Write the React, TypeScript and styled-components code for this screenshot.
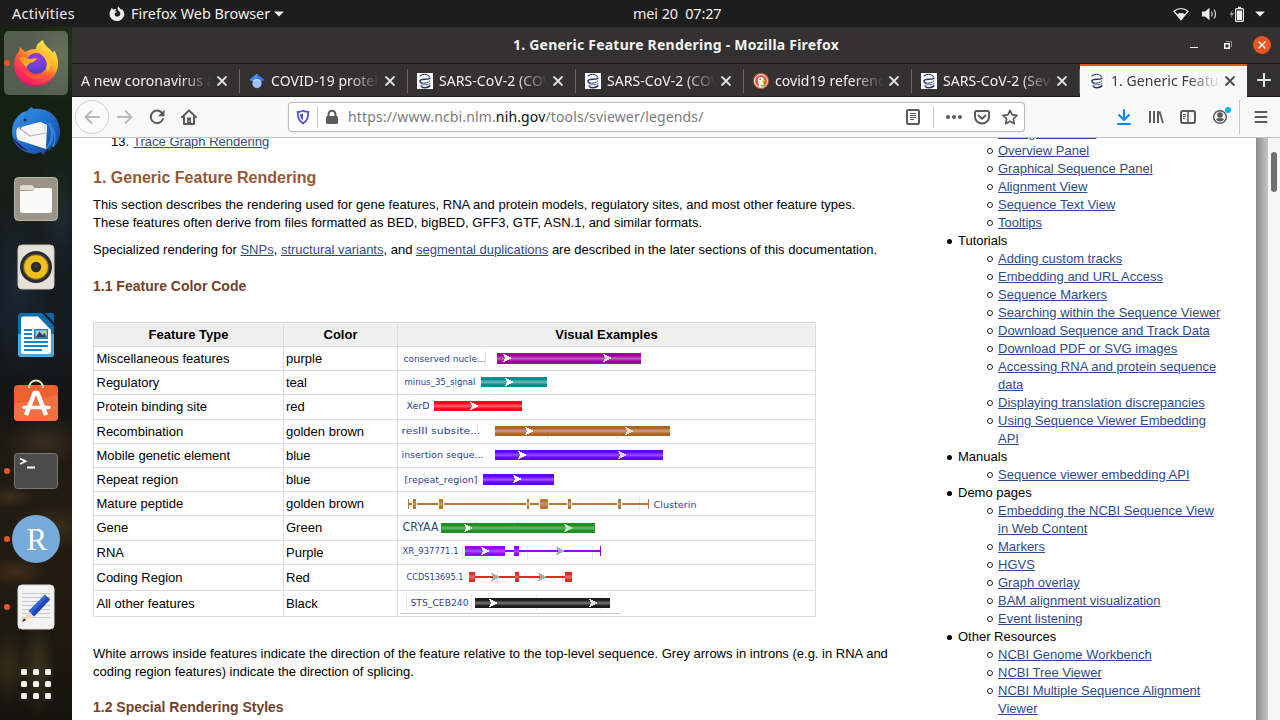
import React from "react";
import styled, { createGlobalStyle } from "styled-components";

const Global = createGlobalStyle`
  *, *::before, *::after { box-sizing: border-box; }
  body { margin: 0; overflow: hidden; font-family: "Liberation Sans", Arial, sans-serif; font-size: 13px; color: #000; }
  svg { display: block; flex: none; overflow: visible; }
`;

const uiFont = `"Noto Sans", "Open Sans", sans-serif`;

const Desktop = styled.div`
  width: 1280px; height: 720px; overflow: hidden;
  display: flex; flex-direction: column; background: #1d1d1d;
`;
const TopBar = styled.header`
  height: 27px; flex: none; display: flex; align-items: center;
  background: #1d1d1d; color: #efefef; font: 14.4px/26px ${uiFont};
`;
const TopLeft = styled.div`display: flex; align-items: center; padding-left: 12px; width: 633px;`;
const TopRight = styled.div`flex: 1; display: flex; align-items: center; justify-content: flex-end; padding-right: 15px;`;
const Label = styled.span<{ $ls?: number; $w?: number }>`
  white-space: pre; letter-spacing: ${p => p.$ls ?? 0}px;
  ${p => (p.$w ? `width: ${p.$w}px;` : "")}
`;
const Indicator = styled.span<{ $gap: number }>`margin-right: ${p => p.$gap}px;`;
const AppGlyph = styled.span`margin-right: 6px;`;
const Body = styled.div`flex: 1; display: flex; min-height: 0;`;
const Dock = styled.nav`
  width: 72px; flex: none; padding-top: 2px; display: flex; flex-direction: column;
  background:
    radial-gradient(ellipse 30px 46px at 60px 30px, #3b4c2799, transparent),
    radial-gradient(ellipse 34px 90px at 18px 260px, #1d2a3acc, transparent),
    radial-gradient(ellipse 24px 60px at 60px 190px, #26334199, transparent),
    radial-gradient(ellipse 40px 26px at 44px 415px, #4a3a2699, transparent),
    radial-gradient(ellipse 26px 12px at 10px 470px, #4b3c2399, transparent),
    radial-gradient(ellipse 44px 22px at 54px 500px, #43361fbb, transparent),
    radial-gradient(ellipse 30px 14px at 16px 545px, #4c351dbb, transparent),
    radial-gradient(ellipse 22px 40px at 8px 640px, #43381faa, transparent),
    radial-gradient(ellipse 18px 50px at 38px 640px, #4a4226aa, transparent),
    linear-gradient(#17240f 0, #142013 90px, #161f17 150px, #151a1b 220px, #141a20 300px, #141514 380px, #1e1a13 420px, #241c12 540px, #1d1810 600px, #17140e 693px);
`;
const DockItem = styled.div<{ $active?: boolean; $running?: boolean }>`
  position: relative; width: 64px; height: 64px; margin: 2px 4px; border-radius: 5px;
  display: flex; align-items: center; justify-content: center;
  background: ${p => (p.$active ? "rgba(255,255,255,.27)" : "transparent")};
  &::before {
    content: ""; display: ${p => (p.$running ? "block" : "none")};
    position: absolute; left: 0; top: 29px; width: 6px; height: 6px; border-radius: 50%; background: #e95420;
  }
`;
const AppsButton = styled.div`
  width: 30px; height: 30px; margin: 28px auto 0 21px; display: grid; grid-template-columns: repeat(3, 6px); gap: 6px;
  span { width: 6px; height: 6px; border-radius: 1.5px; background: #f1f1ef; }
`;

const Window = styled.main`flex: 1; min-width: 0; display: flex; flex-direction: column;`;
const TitleBar = styled.div`
  height: 37px; flex: none; display: grid; grid-template-columns: 1fr auto 1fr; align-items: center;
  background: #333132; border-bottom: 1px solid #1b1a1a; color: #f4f3f1;
  font: bold 14px/36px ${uiFont};
`;
const WindowButtons = styled.div`display: flex; justify-content: flex-end; align-items: center; padding-right: 9px;`;
const TabStrip = styled.div`height: 33px; flex: none; display: flex; background: #333132; box-shadow: inset 0 -1px #1b1a1a;`;
const Tab = styled.div<{ $active?: boolean }>`
  width: ${p => (p.$active ? 167 : 168)}px; flex: none; height: 33px; padding: 0 9px 2px; display: flex; align-items: center; position: relative;
  font: 14px/30px ${uiFont}; color: ${p => (p.$active ? "#3b3b3b" : "#f4f3f1")};
  background: ${p => (p.$active ? "#f8f8f8" : "transparent")};
  border-top: 2px solid ${p => (p.$active ? "#e95420" : "transparent")};
  &::after {
    content: ""; display: ${p => (p.$active ? "none" : "block")};
    position: absolute; right: 0; top: 3px; width: 1px; height: 24px; background: #666;
  }
`;
const TabTitle = styled.span`
  flex: 1; min-width: 0; overflow: hidden; white-space: nowrap; letter-spacing: .06px;
  mask-image: linear-gradient(to right, #000 calc(100% - 32px), transparent 100%);
`;
const Favicon = styled.span`width: 16px; height: 16px; margin-right: 6px;`;
const TabClose = styled.span<{ $active?: boolean }>`width: 12px; height: 12px; margin: 0 ${p => (p.$active ? 2 : 3)}px 0 4px;`;
const NewTab = styled.div`flex: 1; display: flex; align-items: center; justify-content: center; padding-bottom: 1px;`;

const Toolbar = styled.div`
  height: 41px; flex: none; display: flex; align-items: center; background: #f8f8f8; border-bottom: 1px solid #c0c0c0;
`;
const BackButton = styled.div`
  width: 34px; height: 34px; margin-left: 3px; border: 1px solid #d0d0d0; border-radius: 50%; background: #fbfbfb;
  display: flex; align-items: center; justify-content: center;
`;
const ToolIcon = styled.div<{ $ml: number }>`width: 16px; height: 16px; margin-left: ${p => p.$ml}px;`;
const UrlBar = styled.div`
  width: 737px; height: 30px; margin-left: 91px; padding-left: 6px; display: flex; align-items: center;
  border: 1px solid #bcbcbc; border-radius: 4px; background: #fff; box-shadow: 0 0 1px #ccc;
`;
const Divider = styled.i<{ $ml: number; $h?: number }>`
  width: 1px; height: ${p => p.$h ?? 22}px; margin-left: ${p => p.$ml}px; background: #c8c8c8;
`;
const Url = styled.span`
  width: 560px; margin-left: 6px; font: 14px/28px ${uiFont}; letter-spacing: .14px; color: #7b7b7b; white-space: nowrap;
  b { font-weight: 400; color: #0c0c0d; }
`;

const Viewport = styled.div`flex: 1; min-height: 0; display: flex; overflow: hidden; background: #fff;`;
const Page = styled.div`width: 1184px; flex: none; display: flex; line-height: 18px;`;
const PageEdge = styled.div`width: 12px; flex: none; background: linear-gradient(to right, #8c8c8c, #c6c6c6);`;
const Scrollbar = styled.div`
  width: 12px; flex: none; background: #f6f6f6; padding: 14px 0 0 3px;
  &::before { content: ""; display: block; width: 6px; height: 40px; border-radius: 3px; background: #6f6f6f; }
`;
const Article = styled.article`width: 825px; flex: none; padding-left: 21px;`;
const TocLine = styled.div`margin: -5px 0 0 18px; height: 18px; display: flex; gap: 4px;`;
const A = styled.a`color: #2f4a8b; text-decoration: underline; text-underline-offset: 1px;`;
const H2 = styled.h2`margin: 17px 0 0; font: bold 16px/20px "Liberation Sans", sans-serif; color: #985735;`;
const H3 = styled.h3<{ $mt: number }>`margin: ${p => p.$mt}px 0 0; font: bold 14px/18px "Liberation Sans", sans-serif; color: #724128;`;
const P = styled.p<{ $mt: number }>`margin: ${p => p.$mt}px 0 0; white-space: nowrap;`;

const Table = styled.div`width: 723px; margin-top: 27px; border: 1px solid #dcdcdc; border-top: 0;`;
const Row = styled.div<{ $h: number; $head?: boolean }>`
  display: grid; grid-template-columns: 189px 113px 417px; column-gap: 1px; height: ${p => p.$h}px;
  border-top: 1px solid #dcdcdc; background: #dcdcdc;
  ${p => p.$head && "font-weight: bold; text-align: center;"}
`;
const Cell = styled.div<{ $head?: boolean; $pad?: number }>`
  background: ${p => (p.$head ? "#efefef" : "#fff")}; padding-left: ${p => p.$pad ?? 0}px;
  display: flex; align-items: center; justify-content: ${p => (p.$head ? "center" : "flex-start")};
`;

const Aside = styled.aside`width: 309px; margin-left: 48px; margin-top: -14px;`;
const Item = styled.div<{ $sub?: boolean }>`
  display: flex; margin-left: ${p => (p.$sub ? 42 : 2)}px;
  &::before {
    content: ""; flex: none; width: ${p => (p.$sub ? 6 : 5)}px; height: ${p => (p.$sub ? 6 : 5)}px;
    margin: ${p => (p.$sub ? "6px 5px 0 0" : "7px 6px 0 0")}; border-radius: 50%;
    background: ${p => (p.$sub ? "transparent" : "#000")}; border: ${p => (p.$sub ? "1px solid #222" : "0")};
  }
`;
const SubLink = styled.div`width: 229px;`;

/* ---------- feature tracks ---------- */
type Exon = [number, number];
type Feature = {
  type: string; color: string; h: number; label: string; lx: number; lw: number; ly: number;
  fill: string; core: string; y: number; bh: number; boxes: Exon[]; line?: Exon;
  arrows: [number, string][]; ticks: number[]; base?: [number, number, number, string];
};
const F: Feature[] = [
  { type: "Miscellaneous features", color: "purple", h: 24, label: "conserved nucle...", lx: 5.5, lw: 82, ly: 15, fill: "#990099", core: "#c458c0", y: 6, bh: 11, boxes: [[99, 243]], arrows: [[105, "#fff"], [205, "#e6d9e6"]], ticks: [87] },
  { type: "Regulatory", color: "teal", h: 24, label: "minus_35_signal", lx: 6.5, lw: 71, ly: 14, fill: "#008c8a", core: "#6cbcbc", y: 6, bh: 10, boxes: [[83, 149]], arrows: [[107, "#fff"]], ticks: [55] },
  { type: "Protein binding site", color: "red", h: 25, label: "XerD", lx: 8.5, lw: 23, ly: 14, fill: "#ff0018", core: "#ff6b70", y: 6, bh: 10, boxes: [[36, 124]], arrows: [[72, "#fff"]], ticks: [16, 96] },
  { type: "Recombination", color: "golden brown", h: 24, label: "resIII subsite...", lx: 3.5, lw: 79, ly: 14, fill: "#b1621f", core: "#cf9f78", y: 6, bh: 10, boxes: [[97, 272]], arrows: [[127, "#fff"], [227, "#e3dcd6"]], ticks: [9, 79, 149, 219] },
  { type: "Mobile genetic element", color: "blue", h: 24, label: "insertion seque...", lx: 3.5, lw: 82, ly: 14, fill: "#6000ff", core: "#9a55ff", y: 6, bh: 10, boxes: [[97, 265]], arrows: [[120, "#fff"], [220, "#ddd6e8"]], ticks: [132] },
  { type: "Repeat region", color: "blue", h: 24, label: "[repeat_region]", lx: 6.5, lw: 73, ly: 15, fill: "#6000ff", core: "#9a55ff", y: 6, bh: 11, boxes: [[85, 156]], arrows: [[115, "#fff"]], ticks: [26, 97] },
  { type: "Mature peptide", color: "golden brown", h: 24, label: "Clusterin", lx: 255.5, lw: 43, ly: 16, fill: "#b87431", core: "#cc9964", y: 7, bh: 10, boxes: [[10, 11], [15, 18], [41, 45], [129, 131], [142, 150], [170, 173], [220, 223], [250, 251]], line: [11, 250], arrows: [], ticks: [45, 143, 241] },
  { type: "Gene", color: "Green", h: 25, label: "CRYAA", lx: 4.5, lw: 36, ly: 15, fill: "#1b8f1d", core: "#68b869", y: 7, bh: 10, boxes: [[43, 197]], arrows: [[66, "#e4f8e4"], [166, "#bfe8c4"]], ticks: [78, 119] },
  { type: "RNA", color: "Purple", h: 24, label: "XR_937771.1", lx: 4.5, lw: 56, ly: 13, fill: "#9800ff", core: "#b94dff", y: 5, bh: 10, boxes: [[67, 107], [116, 121], [202, 203]], line: [107, 202], arrows: [[83, "#fff"], [158, "#aaa"]], ticks: [3, 64, 129, 194], base: [3, 209, 17, "#ecf8ec"] },
  { type: "Coding Region", color: "Red", h: 26, label: "CCDS13695.1", lx: 8.5, lw: 57, ly: 15, fill: "#dc2a25", core: "#ee736d", y: 7, bh: 10, boxes: [[71, 77], [117, 121], [167, 174]], line: [77, 167], arrows: [[93, "#aaa"], [140, "#aaa"]], ticks: [34, 99, 164] },
  { type: "All other features", color: "Black", h: 26, label: "STS_CEB240", lx: 12.5, lw: 58, ly: 15, fill: "#1c1c1c", core: "#757575", y: 7, bh: 10, boxes: [[77, 212]], arrows: [[91, "#fff"], [191, "#ddd"]], ticks: [8, 73, 138, 203], base: [2, 222, 22, "#c8c8c8"] },
];

const Track = ({ f, i }: { f: Feature; i: number }) => {
  const mid = f.y + Math.floor(f.bh / 2);
  const big = f.label === "CRYAA";
  return (
    <svg width="417" height={f.h - 1} shapeRendering="crispEdges">
      <defs>
        <linearGradient id={`g${i}`} x1="0" y1="0" x2="0" y2="1">
          <stop offset="0" stopColor={f.fill} /><stop offset=".22" stopColor={f.fill} />
          <stop offset=".5" stopColor={f.core} /><stop offset=".78" stopColor={f.fill} /><stop offset="1" stopColor={f.fill} />
        </linearGradient>
      </defs>
      {f.ticks.map(t => <rect key={t} x={t} y="4" width="1" height="15" fill="#e6e6e6" />)}
      {f.base && <rect x={f.base[0]} y={f.base[2]} width={f.base[1] - f.base[0]} height="1" fill={f.base[3]} />}
      {f.line && <rect x={f.line[0]} y={mid - 1} width={f.line[1] - f.line[0]} height="2" fill={f.fill} />}
      {f.boxes.map(([a, b]) => (
        <React.Fragment key={a}>
          {f.type === "Mature peptide" && b - a > 1 && <rect x={a - 1} y={f.y} width={b - a + 2} height={f.bh} fill="#fff" />}
          <rect x={a} y={f.y} width={b - a} height={f.bh} fill={b - a > 1 ? `url(#g${i})` : f.fill} />
        </React.Fragment>
      ))}
      {f.arrows.map(([x, c]) => (
        <path key={x} d={`M${x} ${mid - 4}h2v1h2v1h2v1h2v2h-2v1h-2v1h-2v1h-2v-1h1v-2h1v-2h-1v-2h-1z`} fill={c} />
      ))}
      <text x={f.lx} y={f.ly} textLength={f.lw} lengthAdjust="spacingAndGlyphs" fill={big ? "#2b4a6a" : "#2c3f94"}
        fontFamily='"DejaVu Sans", sans-serif' fontSize={big ? 11.5 : 9.3}>{f.label}</text>
    </svg>
  );
};

/* ---------- icons ---------- */
const Stroke = ({ d, c = "#5a5a5a", w = 2, s = 16 }: { d: string; c?: string; w?: number; s?: number }) => (
  <svg width={s} height={s} viewBox="0 0 16 16" fill="none" stroke={c} strokeWidth={w} strokeLinecap="round" strokeLinejoin="round"><path d={d} /></svg>
);
const Close = ({ c = "#e2e2e2" }: { c?: string }) => (
  <svg width="12" height="12" fill="none" stroke={c} strokeWidth="1.8" strokeLinecap="round"><path d="M2 2l8 8M10 2L2 10" /></svg>
);
const Ncbi = () => (
  <svg width="16" height="16"><rect width="16" height="16" fill="#fff" />
    <g fill="none" stroke="#25386a" strokeLinecap="round">
      <path d="M3 3.200C4.800.8 10 .4 12.600 3.600" strokeWidth="1.100" />
      <path d="M13 5.200C10.500 7.400 4 5 2.900 7.900c-.2 1 .6 1.800 1.700 2.200" strokeWidth="1.500" />
      <path d="M4.600 10.100c3 .6 7.300-.4 8.400-2.300" strokeWidth="1" />
      <path d="M3 13C4.500 10.600 8 12.600 13 10.800" strokeWidth=".7" />
      <path d="M4.600 13.800c2 1.300 6 1.300 8.200-.9" strokeWidth="1.600" />
    </g>
  </svg>
);
const Scholar = () => (
  <svg width="16" height="16"><path d="M8 .8L15.600 7 12.500 8.200H3.500L.4 7z" fill="#3b78e7" /><path d="M8 .8v7.400H3.500L.4 7z" fill="#4f8bf5" />
    <circle cx="8" cy="10.600" r="4.600" fill="#a0c2fb" /><path d="M3.800 8.700a4.700 4.700 0 0 1 8.400 0L8 7z" fill="#cfe0fc" /></svg>
);
const Duck = () => (
  <svg width="16" height="16"><circle cx="8" cy="8" r="8" fill="#de5833" /><circle cx="8" cy="8" r="6.400" fill="none" stroke="#fff" strokeWidth="1" />
    <path d="M6.200 13.600C5.500 10.500 4.600 7 5.200 5.400 5.800 3.600 10 3 10.600 6l-.2 4 .8 3.400C9.500 14.400 7.500 14.300 6.200 13.600z" fill="#fff" />
    <path d="M8.600 7.600c1.200-.8 3.200-.8 3.800-.4-.5.700-1.600 1.200-2.700 1.400l1.800.5c-1.200.5-2.900.3-2.900-.5z" fill="#fdd20a" /><circle cx="7.200" cy="6.200" r=".8" fill="#2d4f8e" />
    <path d="M7.500 11.500l2 .8 2.400-.8v2.200l-2.200-.4-1.800.5z" fill="#65bc46" /></svg>
);

const FirefoxLogo = () => (
  <svg width="46" height="48" viewBox="0 0 46 48">
    <defs>
      <linearGradient id="ffa" x1=".85" y1=".05" x2=".25" y2=".95"><stop offset="0" stopColor="#fff44f" /><stop offset=".35" stopColor="#ffb62a" /><stop offset=".62" stopColor="#ff5a36" /><stop offset="1" stopColor="#f0136e" /></linearGradient>
      <radialGradient id="ffb" cx=".5" cy=".25" r=".8"><stop offset="0" stopColor="#a238c8" /><stop offset=".5" stopColor="#7540e0" /><stop offset="1" stopColor="#4a3fb0" /></radialGradient>
      <linearGradient id="ffc" x1="0" y1="0" x2="1" y2="1"><stop offset="0" stopColor="#ff8a16" /><stop offset="1" stopColor="#ffcf2f" /></linearGradient>
    </defs>
    <path d="M30 1c1 6 7 8 10 13l1-3c3 5 4.500 10 4 15-1 12-11 21-22 21S1 38 1 26c0-6 2-10 5-13l1-5 5 5c3-2 7-3 11-3 0-4 3-7 7-9z" fill="url(#ffa)" />
    <path d="M2 33c4 15 30 18 39 3-5 15-34 16-39-3z" fill="#e3107a" opacity=".8" />
    <circle cx="23.500" cy="24.500" r="10.500" fill="url(#ffb)" />
    <path d="M27 14c5-3 10 1 11 7 1 7-3 13-9 15 4-5 6-9 4-14-1-4-4-5-6-8z" fill="#ffc02c" />
    <path d="M6 19c4-3 7 0 11 1 3 0 5-1 7-1-1 3-4 4-7 5-2 1-2 3-4 4-2-3-5-5-7-9z" fill="url(#ffc)" />
    <path d="M13 27c-2 5 3 10 10 9 6 0 9-3 11-7 1 7-5 11-11 11-8 0-13-6-10-13z" fill="#ff5b33" opacity=".75" />
  </svg>
);
const Thunderbird = () => (
  <svg width="48" height="48" viewBox="0 0 48 48">
    <defs><linearGradient id="tb" x1="0" y1="0" x2="1" y2="1"><stop offset="0" stopColor="#3a9be8" /><stop offset=".5" stopColor="#1f6fc9" /><stop offset="1" stopColor="#1a3c93" /></linearGradient></defs>
    <path d="M15 4l4-4 3 2c13-2 26 7 26 23 0 7-3 12-7 16l1-4-5 7-1-3-5 7-2-3-6 2C9 46 0 36 0 25 0 15 5 9 11 5z" fill="url(#tb)" />
    <path d="M1 30c3 8 8 12 15 14L5 35z" fill="#2b1566" />
    <path d="M5 21l23-6 7 3-1 24L6 33c-2-4-2-8-1-12z" fill="#f7f7f8" />
    <path d="M6 20l12 9 16-3" fill="none" stroke="#b9b9c4" strokeWidth="1.200" /><path d="M28 15l7 3v8z" fill="#e2e4ec" />
    <path d="M8 23c-1-10 6-19 14-21-3 4 4 3 8 7-8-1-13 2-15 6l-3 2z" fill="#2a7fd6" /><circle cx="13" cy="13" r="1.500" fill="#17244f" />
    <path d="M34 42c7-8 7-19 2-26 6 5 9 13 5 24M38 38c4-8 3-16 0-22" fill="none" stroke="#2e86de" strokeWidth="1.500" />
  </svg>
);
const Files = () => (
  <svg width="44" height="44"><rect x=".5" y=".5" width="43" height="43" rx="4" fill="#9b9385" stroke="#bcb5a6" />
    <path d="M6 13V10.500Q6 8 8.500 8H18l3 3h15q2 0 2 3z" fill="#dcd8cd" /><path d="M6 14h13l3-3h14q2 0 2 2v20.500q0 2.500-2.500 2.500h-27Q6 36 6 33.500z" fill="#fafafa" /></svg>
);
const Rhythm = () => (
  <svg width="38" height="46"><rect x="1" y="1" width="36" height="44" rx="4" fill="#e6e1d7" stroke="#cfc9bd" /><circle cx="19" cy="23" r="16" fill="#2b2b38" /><circle cx="19" cy="23" r="13" fill="#6b6030" />
    <circle cx="19" cy="23" r="11.800" fill="#efbf1d" /><circle cx="19" cy="23" r="5.200" fill="#2a2a2a" /><circle cx="19" cy="22" r="2" fill="#3c3c3c" /></svg>
);
const Writer = () => (
  <svg width="38" height="46"><path d="M4 1h21l12 13v28q0 3-3 3H4q-3 0-3-3V4q0-3 3-3z" fill="#0a6fae" /><path d="M1 22h36v20q0 3-3 3H4q-3 0-3-3z" fill="#4aa9e0" /><path d="M28 1h7q2 0 2 2v8z" fill="#0c669f" />
    <path d="M6 4.500h15l13 13.500v21q0 3-3 3H7q-3 0-3-3v-32q0-2.500 2-2.500z" fill="#fdfdfd" />
    <g fill="#1784c4"><path d="M7 17h8v2H7zM7 21h8v2H7zM7 25h8v2H7zM7 29h24v2H7zM7 33h24v2H7zM7 37h18v2H7z" /><path d="M17 17h14v10H17z" /></g>
    <path d="M18.500 18.500h11v7h-11z" fill="#9dd2ef" /><path d="M18.500 25.500l4-6 3 3.500 2-2 2 4.500z" fill="#3a3f44" /><path d="M26 18.500h3.500V22z" fill="#f5c400" /></svg>
);
const Software = () => (
  <svg width="44" height="50"><rect y="7" width="44" height="36" rx="4" fill="#ee6231" /><path d="M0 26l44-9v22q0 4-4 4H4q-4 0-4-4z" fill="#f47b50" opacity=".6" />
    <path d="M15 10C15 0 29 0 29 10" fill="none" stroke="#f3dfb5" strokeWidth="2" />
    <g fill="none" stroke="#fff" strokeLinejoin="round"><path d="M12 37L20.500 15h3L32 37" strokeWidth="4.500" /><path d="M10 29.500h25" strokeWidth="3.600" strokeLinecap="round" /></g></svg>
);
const Terminal = () => (
  <svg width="44" height="36"><rect x=".5" y=".5" width="43" height="35" rx="3" fill="#4b4b4b" stroke="#777" /><path d="M6 5.500l5.500 2.700L6 11M13 14.500h8" fill="none" stroke="#fff" strokeWidth="1.800" /></svg>
);
const RStudio = () => (
  <svg width="48" height="48"><circle cx="24" cy="24" r="24" fill="#75aadb" /><text x="14.500" y="34.500" fontFamily='"Liberation Serif", serif' fontSize="32" textLength="20.500" lengthAdjust="spacingAndGlyphs" fill="#fff">R</text></svg>
);
const Editor = () => (
  <svg width="38" height="46"><rect x="1" y="1" width="36" height="44" rx="4" fill="#f3f3f3" stroke="#ddd" /><path d="M5 9.500h28M5 13.500h28M5 17.500h28M5 21.500h28M5 25.500h28M5 29.500h28M5 33.500h28" stroke="#c9c9c9" />
    <path d="M11.500 27L28 10.500l5 5L17 32.500z" fill="#2f62d6" /><path d="M14 30l16.500-17 2.500 2.500L17 32.500z" fill="#1e49b5" /><path d="M11.500 27l5.500 5.500L5 38z" fill="#f6d8b8" /><path d="M7 34l2 2.300L5 38z" fill="#333" /></svg>
);

const tabs = [
  { t: "A new coronavirus associated", i: null },
  { t: "COVID-19 protein", i: <Scholar /> },
  { t: "SARS-CoV-2 (COVID", i: <Ncbi /> },
  { t: "SARS-CoV-2 (COVID", i: <Ncbi /> },
  { t: "covid19 reference", i: <Duck /> },
  { t: "SARS-CoV-2 (Severe", i: <Ncbi /> },
  { t: "1. Generic Feature", i: <Ncbi />, active: true },
];

const menu: [string, string[]][] = [
  ["", ["Configure Tracks", "Overview Panel", "Graphical Sequence Panel", "Alignment View", "Sequence Text View", "Tooltips"]],
  ["Tutorials", ["Adding custom tracks", "Embedding and URL Access", "Sequence Markers", "Searching within the Sequence Viewer", "Download Sequence and Track Data", "Download PDF or SVG images", "Accessing RNA and protein sequence data", "Displaying translation discrepancies", "Using Sequence Viewer Embedding API"]],
  ["Manuals", ["Sequence viewer embedding API"]],
  ["Demo pages", ["Embedding the NCBI Sequence View in Web Content", "Markers", "HGVS", "Graph overlay", "BAM alignment visualization", "Event listening"]],
  ["Other Resources", ["NCBI Genome Workbench", "NCBI Tree Viewer", "NCBI Multiple Sequence Alignment Viewer"]],
];

export default function App() {
  return (
    <Desktop>
      <Global />
      <TopBar>
        <TopLeft>
          <Label $ls={0.3} $w={97}>Activities</Label>
          <AppGlyph><svg width="16" height="16" viewBox="0 0 16 16"><path d="M9.500.2c.2 1.700 2 2.300 3 3.800l.5-.9c1.700 2 2.500 4.300 2.300 6A7.500 7.500 0 0 1 .5 8.300C.5 6 1.300 4.300 2.300 3.300l.2-1.500 1.700 1.700c1-.5 2-.7 3-.6C7 4 6.200 4.600 6 5.300l2 .3C7.500 6.800 5.800 6.700 5.600 8c0 1.600 1.200 2.600 2.700 2.600 2.100 0 3.400-1.500 3-3.500-.3-1.300-1.500-1.700-2.300-3-.7-1.200-.3-3 .5-3.900z" fill="#eee" /></svg></AppGlyph>
          <Label $w={143}>Firefox Web Browser</Label>
          <svg width="10" height="6"><path d="M0 .5h10L5 5.500z" fill="#eee" /></svg>
        </TopLeft>
        <Label $ls={-0.1}>{"mei 20  07:27"}</Label>
        <TopRight>
          <Indicator $gap={13}><svg width="16" height="14" viewBox="0 0 16 14"><path d="M1 4.200C5 .6 11 .6 15 4.200L8 12.800z" fill="none" stroke="#eee" strokeWidth="1.200" /><path d="M4 7.200c2.500-1.700 5.500-1.700 8 0L8 12.800z" fill="#eee" /></svg></Indicator>
          <Indicator $gap={12}><svg width="16" height="14" viewBox="0 0 16 14"><path d="M0 4.500h3L7.500.8v12.400L3 9.500H0z" fill="#eee" /><path d="M9.500 4.500q1.600 2.500 0 5M12 2.500q3 4.500 0 9" fill="none" stroke="#ddd" strokeWidth="1.200" /></svg></Indicator>
          <Indicator $gap={11}><svg width="14" height="16"><path d="M2.500 4l-3 5h2l-1 3.500L4 7H2z" fill="#999" /><rect x="5.600" y="2.600" width="7.800" height="12.800" rx="1" fill="none" stroke="#eee" strokeWidth="1.200" /><path d="M8 .8h3v2H8zM7 4.500h5V14H7z" fill="#eee" /></svg></Indicator>
          <svg width="10" height="6"><path d="M0 .5h10L5 5.500z" fill="#eee" /></svg>
        </TopRight>
      </TopBar>
      <Body>
        <Dock>
          <DockItem $active $running><FirefoxLogo /></DockItem>
          <DockItem><Thunderbird /></DockItem>
          <DockItem><Files /></DockItem>
          <DockItem><Rhythm /></DockItem>
          <DockItem><Writer /></DockItem>
          <DockItem><Software /></DockItem>
          <DockItem $running><Terminal /></DockItem>
          <DockItem $running><RStudio /></DockItem>
          <DockItem $running><Editor /></DockItem>
          <AppsButton>{Array.from({ length: 9 }, (_, i) => <span key={i} />)}</AppsButton>
        </Dock>
        <Window>
          <TitleBar>
            <span />
            <Label $ls={0.22}>1. Generic Feature Rendering - Mozilla Firefox</Label>
            <WindowButtons>
              <svg width="81" height="18"><path d="M0 11.500h8" stroke="#fff" /><g fill="none"><path d="M36 5.500h5.500V11" stroke="#8d8d8d" /><path d="M34.700 7.700h4.600v4.600h-4.600z" stroke="#fff" strokeWidth="1.400" /></g>
                <circle cx="72" cy="9" r="9" fill="#e95420" /><path d="M68.500 5.500l7 7M75.500 5.500l-7 7" stroke="#fff" strokeWidth="1.500" /></svg>
            </WindowButtons>
          </TitleBar>
          <TabStrip>
            {tabs.map((t, i) => (
              <Tab key={i} $active={t.active}>
                {t.i && <Favicon>{t.i}</Favicon>}
                <TabTitle>{t.t}</TabTitle>
                <TabClose $active={t.active}><Close c={t.active ? "#4a4a4a" : undefined} /></TabClose>
              </Tab>
            ))}
            <NewTab><svg width="14" height="14"><path d="M7 0v14M0 7h14" stroke="#e2e2e2" strokeWidth="2" /></svg></NewTab>
          </TabStrip>
          <Toolbar>
            <BackButton><Stroke c="#b9b9b9" d="M15 8H1.500M7.500 2L1.500 8l6 6" /></BackButton>
            <ToolIcon $ml={11}><Stroke c="#b9b9b9" d="M-2 8h13.500M5.500 2l6 6-6 6" /></ToolIcon>
            <ToolIcon $ml={13}><svg width="16" height="16"><path d="M13.200 4.200A6.300 6.300 0 1 0 14 10" fill="none" stroke="#5a5a5a" strokeWidth="2" strokeLinecap="round" /><path d="M15.500.8v6.400H9z" fill="#5a5a5a" /></svg></ToolIcon>
            <ToolIcon $ml={16}><svg width="16" height="16"><path d="M1 8.200L8 1.400l7 6.800M3 8v7h10V8" fill="none" stroke="#5a5a5a" strokeWidth="2" strokeLinecap="round" strokeLinejoin="round" /><path d="M6 8.500h4V15H6z" fill="#5a5a5a" /><path d="M7.500 11.500h1V13h-1z" fill="#f8f8f8" /></svg></ToolIcon>
            <UrlBar>
              <svg width="16" height="16"><path d="M8 1.800c1.800.8 3.600 1.100 5.300 1.100 0 5-1 9-5.300 11.500C3.700 11.900 2.700 7.900 2.700 2.900 4.400 2.900 6.200 2.600 8 1.800z" fill="none" stroke="#4c4fdc" strokeWidth="1.800" /><path d="M8 4.600v7C6 10 5.200 8 5.100 5.300 6.200 5.200 7 5 8 4.600z" fill="#5a49d8" /></svg>
              <Divider $ml={6} />
              <svg width="24" height="16"><path d="M10.500 8V5.200a3.500 3.500 0 0 1 7 0V8" fill="none" stroke="#5a5a5a" strokeWidth="2" /><rect x="8" y="7" width="12" height="8" rx="1.500" fill="#5a5a5a" /></svg>
              <Url>https://www.ncbi.nlm.<b>nih.gov</b>/tools/sviewer/legends/</Url>
              <svg width="16" height="16"><rect x="2" y="1" width="12" height="14" rx="1.500" fill="none" stroke="#5a5a5a" strokeWidth="2" /><path d="M5 4.500h6M5 6.500h6M5 8.500h6M5 10.500h4" stroke="#5a5a5a" /></svg>
              <Divider $ml={12} />
              <svg width="90" height="16"><g fill="#5a5a5a"><circle cx="14" cy="8" r="2" /><circle cx="20" cy="8" r="2" /><circle cx="26" cy="8" r="2" /></g>
                <g fill="none" stroke="#5a5a5a" strokeWidth="2" strokeLinecap="round" strokeLinejoin="round"><path d="M42.500 2h11q1.500 0 1.500 1.500V8a7 6.500 0 0 1-14 0V3.500Q41 2 42.500 2z" /><path d="M44.500 6.500L48 9.700l3.500-3.200" />
                  <path strokeWidth="1.700" d="M76 1.300l2.100 4.500 4.900.6-3.600 3.400.9 4.900L76 12.300l-4.300 2.400.9-4.900L69 6.400l4.900-.6z" /></g></svg>
            </UrlBar>
            <ToolIcon $ml={91}><Stroke c="#0a84ff" d="M8 1v9.500M3 6l5 5 5-5M2 15h12" /></ToolIcon>
            <ToolIcon $ml={16}><svg width="16" height="16"><path d="M2 2v12M6 2v12M10 2v12" stroke="#5a5a5a" strokeWidth="2" /><path d="M11.500 2.500L15 14" stroke="#5a5a5a" strokeWidth="1.800" /></svg></ToolIcon>
            <ToolIcon $ml={16}><svg width="16" height="16"><rect x="1" y="2" width="14" height="12" rx="2" fill="none" stroke="#5a5a5a" strokeWidth="2" /><path d="M8 2v12" stroke="#5a5a5a" strokeWidth="1.500" /><path d="M3 5.500h3M3 7.500h3M3 9.500h2" stroke="#5a5a5a" /></svg></ToolIcon>
            <ToolIcon $ml={16}><svg width="16" height="16"><circle cx="8" cy="8" r="6.300" fill="none" stroke="#5a5a5a" strokeWidth="1.500" /><circle cx="8" cy="6" r="2.800" fill="#5a5a5a" /><path d="M3.800 10q4.200-2.200 8.400 0-1.500 2.500-4.200 2.500T3.800 10z" fill="#5a5a5a" /><circle cx="16" cy="1" r="3" fill="#00b3f4" /></svg></ToolIcon>
            <Divider $ml={11} $h={34} />
            <ToolIcon $ml={13}><Stroke d="M2.500 3h11M2.500 8h11M2.500 13h11" /></ToolIcon>
          </Toolbar>
          <Viewport>
            <Page>
              <Article>
                <TocLine><span>13.</span><A>Trace Graph Rendering</A></TocLine>
                <H2>1. Generic Feature Rendering</H2>
                <P $mt={8}>This section describes the rendering used for gene features, RNA and protein models, regulatory sites, and most other feature types.<br />These features often derive from files formatted as BED, bigBED, GFF3, GTF, ASN.1, and similar formats.</P>
                <P $mt={9}>Specialized rendering for <A>SNPs</A>, <A>structural variants</A>, and <A>segmental duplications</A> are described in the later sections of this documentation.</P>
                <H3 $mt={18}>1.1 Feature Color Code</H3>
                <Table>
                  <Row $h={24} $head><Cell $head>Feature Type</Cell><Cell $head>Color</Cell><Cell $head>Visual Examples</Cell></Row>
                  {F.map((f, i) => (
                    <Row key={f.type} $h={f.h}><Cell $pad={2.5}>{f.type}</Cell><Cell $pad={2}>{f.color}</Cell><Cell><Track f={f} i={i} /></Cell></Row>
                  ))}
                </Table>
                <P $mt={28}>White arrows inside features indicate the direction of the feature relative to the top-level sequence. Grey arrows in introns (e.g. in RNA and<br />coding region features) indicate the direction of splicing.</P>
                <H3 $mt={17}>1.2 Special Rendering Styles</H3>
              </Article>
              <Aside>
                {menu.map(([head, items]) => (
                  <React.Fragment key={head}>
                    {head && <Item>{head}</Item>}
                    {items.map(x => <Item $sub key={x}><SubLink><A>{x}</A></SubLink></Item>)}
                  </React.Fragment>
                ))}
              </Aside>
            </Page>
            <PageEdge />
            <Scrollbar />
          </Viewport>
        </Window>
      </Body>
    </Desktop>
  );
}
